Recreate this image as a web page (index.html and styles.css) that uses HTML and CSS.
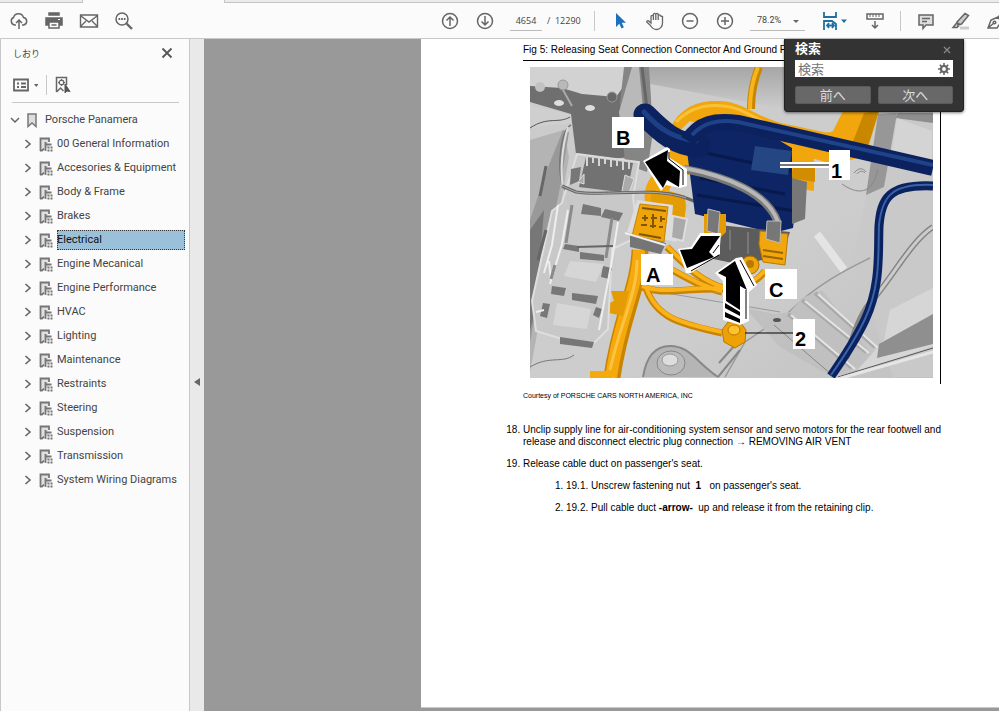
FILE: index.html
```html
<!DOCTYPE html>
<html lang="ja">
<head>
    <meta charset="UTF-8">
    <meta name="viewport" content="width=device-width, initial-scale=1.0">
    <title>Porsche Panamera</title>
    <link rel="stylesheet" href="styles.css">
</head>
<body>
    <svg class="defs" width="0" height="0" aria-hidden="true">
        <symbol id="chevron" viewBox="0 0 8 12">
            <path d="M1.500 2l4.500 4-4.500 4" fill="none" stroke="#666" stroke-width="1.600"/>
        </symbol>
        <symbol id="section" viewBox="0 0 14 15">
            <path d="M2 2h7v9H2z" fill="#e0e0e0"/>
            <path d="M1.500 14V1.500H10V5M1 13.500h2l2-2" fill="none" stroke="#757575" stroke-width="1.800"/>
            <path d="M6.500 5v9M6.500 7.500h6M8.500 10.500h2M11.500 10.500h2M8.500 13.500h2M11.500 13.500h2" fill="none" stroke="#757575" stroke-width="1.800"/>
        </symbol>
    </svg>

    <div class="tabs"><div class="tab-home"></div><div class="tab-active"></div><div class="tab-rest"></div></div>

    <header class="toolbar">
        <div class="group file-group">
            <button class="icon" aria-label="Upload"><svg viewBox="0 0 20 20"><path d="M7 14H5.500A4 4 0 0 1 4.500 6.500 5.200 5.200 0 0 1 14.500 6.500 3.800 3.800 0 0 1 14.500 14H13M10 18V9M7 12l3-3 3 3"/></svg></button>
            <button class="icon" aria-label="Print"><svg viewBox="0 0 20 20"><path class="fill" d="M5 2h10v2H5zM2 7h16v7H2z"/><path d="M5 11h10v6H5z" fill="#fff"/><path d="M7.500 14h5"/><path d="M4 5.500h12" stroke="#fff" stroke-width="1"/><path d="M14 8.500h2" stroke="#fff" stroke-width="1"/></svg></button>
            <button class="icon" aria-label="Mail"><svg viewBox="0 0 20 20"><path d="M1.500 4h17v12h-17zM2 5l8 6 8-6M2 15l5-5M18 15l-5-5" stroke-width="1.400"/></svg></button>
            <button class="icon" aria-label="Find"><svg viewBox="0 0 20 20"><circle cx="8" cy="8" r="6"/><path d="M12.500 12.500l5.500 5.500" stroke-width="2.400"/><path d="M4.500 8h7" stroke-dasharray="1.700 1" stroke-width="2"/></svg></button>
        </div>
        <div class="group view-group">
            <button class="icon" aria-label="Previous page"><svg viewBox="0 0 20 20"><circle cx="10" cy="10" r="7.500"/><path d="M10 15V6M6.500 9.500L10 6l3.500 3.500"/></svg></button>
            <button class="icon" aria-label="Next page"><svg viewBox="0 0 20 20"><circle cx="10" cy="10" r="7.500"/><path d="M10 5v9M6.500 10.500L10 14l3.500-3.500"/></svg></button>
            <div class="pager"><input type="text" value="4654" aria-label="Page"><span>/&nbsp; 12290</span></div>
            <span class="sep"></span>
            <button class="icon" aria-label="Select"><svg viewBox="0 0 20 20"><path d="M6 2v14l3.300-3.200 2.200 4.700 2.400-1.200-2.200-4.500H16z" fill="#1f6fbf" stroke="none"/></svg></button>
            <button class="icon" aria-label="Hand"><svg viewBox="0 0 20 20"><path d="M6 12V5.500a1.200 1.200 0 0 1 2.400 0V9 3.500a1.200 1.200 0 0 1 2.400 0V9 3.500a1.200 1.200 0 0 1 2.400 0V9 5a1.200 1.200 0 0 1 2.400 0L17.500 5.500V12c0 3-2 6.500-6 6.500-3.500 0-5-2-6.500-4.500L1.700 11c0-1.500 1.500-1.500 2.300-.8z" stroke-width="1.300"/></svg></button>
            <button class="icon" aria-label="Zoom out"><svg viewBox="0 0 20 20"><circle cx="10" cy="10" r="7.500"/><path d="M6.500 10h7"/></svg></button>
            <button class="icon" aria-label="Zoom in"><svg viewBox="0 0 20 20"><circle cx="10" cy="10" r="7.500"/><path d="M6 10h8M10 6v8"/></svg></button>
            <label class="zoom"><select aria-label="Zoom"><option>78.2%</option></select></label>
            <button class="icon fit" aria-label="Fit width"><svg viewBox="0 0 30 20"><path d="M4 1v5h12V1M4 19v-9h8l4 3v6M7 14.500h7M9 12l-2 2.500L9 17M12 12l2 2.500-2 2.500" stroke="#1f6f9f" stroke-width="1.800"/><path d="M21 8.500h6l-3 3.500z" fill="#1f6f9f" stroke="none"/></svg></button>
            <button class="icon" aria-label="Scrolling"><svg viewBox="0 0 20 20"><path d="M2 3h16v5H2z"/><path d="M5 3v3M8 3v3M11 3v3M14 3v3" stroke-width="1"/><path d="M10 10v7M7 14l3 3 3-3"/></svg></button>
            <span class="sep"></span>
            <button class="icon" aria-label="Comment"><svg viewBox="0 0 20 20"><path d="M3 4h14v10h-7l-3 3.500V14H3z" fill="#ddd"/><path d="M6 7.500h8M6 10.500h5"/></svg></button>
            <button class="icon" aria-label="Highlight"><svg viewBox="0 0 20 20"><path d="M9 15.500h9v3H9z" fill="#ccc" stroke="none"/><path d="M6 11l8-8.500 3.500 2L10.500 13 7 14zM2 16.500l4-5 3 2-3 3z" fill="#ccc"/></svg></button>
            <button class="icon" aria-label="Sign"><svg viewBox="0 0 20 20"><path d="M2 17l3-8 7-3 3 5-4 6zM12 6l3-3 4 5-4 3M2 17l6-5"/><circle cx="8.500" cy="11.500" r="1.300"/></svg></button>
        </div>
    </header>

    <main class="workspace">
        <aside class="sidebar">
            <div class="panel-head">
                <h2>しおり</h2>
                <button class="close" aria-label="Close"><svg width="12" height="12" viewBox="0 0 12 12"><path d="M1.500 1.500l9 9M10.500 1.500l-9 9" stroke="#555" stroke-width="1.800"/></svg></button>
            </div>
            <div class="panel-tools">
                <button aria-label="Options"><svg width="26" height="18" viewBox="0 0 26 18"><path d="M2 3.500h14v11H2z" fill="none" stroke="#666" stroke-width="1.800"/><path d="M5 7.500h2M5 11h2M9 7.500h5M9 11h5" stroke="#666" stroke-width="1.800"/><path d="M22 8h4.500l-2.200 3z" fill="#666"/></svg></button>
                <span class="sep"></span>
                <button aria-label="Find bookmark"><svg width="16" height="18" viewBox="0 0 16 18"><path d="M1.500 16V1.500h10V9M1.500 16l4-4 3 3" fill="none" stroke="#666" stroke-width="1.500"/><circle cx="6.500" cy="6.500" r="2.300" fill="none" stroke="#666" stroke-width="1.300"/><path d="M6.500 3v2M6.500 8v2M3 6.500h2M8 6.500h2" stroke="#666"/><path d="M10 8v9l2-2 3 .5z" fill="#555" stroke="#555"/></svg></button>
            </div>
            <nav>
                <div class="row root">
                    <button class="toggle" aria-label="Collapse"><svg width="10" height="8" viewBox="0 0 10 8"><path d="M1 2l4 4 4-4" fill="none" stroke="#666" stroke-width="1.500"/></svg></button>
                    <svg width="10" height="15" viewBox="0 0 10 15"><path d="M1 1h8v12.500l-4-3.500-4 3.500z" fill="#ddd" stroke="#777" stroke-width="1.500"/></svg>
                    <a href="#">Porsche Panamera</a>
                </div>
                <ul class="tree">
                    <li class="row"><button class="toggle" aria-label="Expand"><svg><use href="#chevron"/></svg></button><svg class="mark"><use href="#section"/></svg><a href="#">00 General Information</a></li>
                    <li class="row"><button class="toggle" aria-label="Expand"><svg><use href="#chevron"/></svg></button><svg class="mark"><use href="#section"/></svg><a href="#">Accesories &amp; Equipment</a></li>
                    <li class="row"><button class="toggle" aria-label="Expand"><svg><use href="#chevron"/></svg></button><svg class="mark"><use href="#section"/></svg><a href="#">Body &amp; Frame</a></li>
                    <li class="row"><button class="toggle" aria-label="Expand"><svg><use href="#chevron"/></svg></button><svg class="mark"><use href="#section"/></svg><a href="#">Brakes</a></li>
                    <li class="row selected"><button class="toggle" aria-label="Expand"><svg><use href="#chevron"/></svg></button><svg class="mark"><use href="#section"/></svg><a href="#">Electrical</a></li>
                    <li class="row"><button class="toggle" aria-label="Expand"><svg><use href="#chevron"/></svg></button><svg class="mark"><use href="#section"/></svg><a href="#">Engine Mecanical</a></li>
                    <li class="row"><button class="toggle" aria-label="Expand"><svg><use href="#chevron"/></svg></button><svg class="mark"><use href="#section"/></svg><a href="#">Engine Performance</a></li>
                    <li class="row"><button class="toggle" aria-label="Expand"><svg><use href="#chevron"/></svg></button><svg class="mark"><use href="#section"/></svg><a href="#">HVAC</a></li>
                    <li class="row"><button class="toggle" aria-label="Expand"><svg><use href="#chevron"/></svg></button><svg class="mark"><use href="#section"/></svg><a href="#">Lighting</a></li>
                    <li class="row"><button class="toggle" aria-label="Expand"><svg><use href="#chevron"/></svg></button><svg class="mark"><use href="#section"/></svg><a href="#">Maintenance</a></li>
                    <li class="row"><button class="toggle" aria-label="Expand"><svg><use href="#chevron"/></svg></button><svg class="mark"><use href="#section"/></svg><a href="#">Restraints</a></li>
                    <li class="row"><button class="toggle" aria-label="Expand"><svg><use href="#chevron"/></svg></button><svg class="mark"><use href="#section"/></svg><a href="#">Steering</a></li>
                    <li class="row"><button class="toggle" aria-label="Expand"><svg><use href="#chevron"/></svg></button><svg class="mark"><use href="#section"/></svg><a href="#">Suspension</a></li>
                    <li class="row"><button class="toggle" aria-label="Expand"><svg><use href="#chevron"/></svg></button><svg class="mark"><use href="#section"/></svg><a href="#">Transmission</a></li>
                    <li class="row"><button class="toggle" aria-label="Expand"><svg><use href="#chevron"/></svg></button><svg class="mark"><use href="#section"/></svg><a href="#">System Wiring Diagrams</a></li>
                </ul>
            </nav>
        </aside>
        <button class="splitter" aria-label="Hide panel"><svg width="6" height="8" viewBox="0 0 6 8"><path d="M6 0v8L0 4z" fill="#666"/></svg></button>

        <section class="viewer">
            <article class="page">
                <figure>
                    <figcaption>Fig 5: Releasing Seat Connection Connector And Ground P</figcaption>
                    <div class="frame">
                        <svg class="drawing" viewBox="530 67 403 311">
                            <defs>
                                <linearGradient id="floor" x1="0" y1="0" x2="1" y2="1">
                                    <stop offset="0" stop-color="#cbcbcb"/>
                                    <stop offset=".6" stop-color="#cdcdcd"/>
                                    <stop offset="1" stop-color="#c2c2c2"/>
                                </linearGradient>
                                <linearGradient id="roof" x1="0" y1="0" x2="0" y2="1">
                                    <stop offset="0" stop-color="#a6a6a6"/>
                                    <stop offset="1" stop-color="#cfcfcf"/>
                                </linearGradient>
                            </defs>
                            <rect x="530" y="67" width="403" height="311" fill="url(#floor)"/>

                            <!-- body shell, left -->
                            <path d="M640 67h160v45l-150-28z" fill="url(#roof)"/>
                            <path d="M530 67h96l-8 33-88-10z" fill="#d2d2d2"/>
                            <path d="M530 86l32 2 20 6 34 3 10-14 6 74-55 5-6-48-41-12z" fill="#6f6f6f"/>
                            <path d="M530 105l41 10v8l-28 3-13 3z" fill="#cfcfcf"/>
                            <path d="M530 128c18-12 28-4 40-11" fill="none" stroke="#555"/>
                            <path d="M530 140l34-10 5 27-6 35-33 180z" fill="#b4b4b4"/>
                            <path d="M530 220l17-50 16-40 6 2-8 50-31 160z" fill="#999"/>
                            <path d="M530 230l14-20-8 100-6 20z" fill="#777"/>
                            <path d="M571 125c-10 5-14 40-9 58 8 20 10 8 14 10" fill="none" stroke="#777" stroke-width="1.500"/>
                            <path d="M568 127c-6 20-8 45-5 60" fill="none" stroke="#ddd" stroke-width="2"/>
                            <path d="M624 67h25l4 65-6 40-22-8-5-60z" fill="#858585"/>
                            <path d="M632 67h7l5 52h-9l-13 20-3-27z" fill="#b9b9b9"/>
                            <path d="M642 67l6 50" stroke="#666" stroke-width="3"/>
                            <circle cx="563" cy="85" r="5" fill="#b9b9b9" stroke="#999"/>
                            <path d="M563 90l9 16" stroke="#aaa" stroke-width="2"/>
                            <circle cx="540" cy="87" r="5" fill="#c2c2c2"/>
                            <circle cx="612" cy="97" r="5" fill="#666" stroke="#999"/>
                            <ellipse cx="559" cy="103" rx="5" ry="3" fill="#ddd"/>
                            <ellipse cx="590" cy="108" rx="5" ry="3" fill="#ddd"/>

                            <!-- right hand body panels -->
                            <path d="M880 113h53v264h-40l-40-120 20-90z" fill="#c9c9c9"/>
                            <path d="M878 114l19-1-13 74-18 8z" fill="#979797"/>
                            <path d="M898 113h35v10l-38-5z" fill="#8e8e8e"/>
                            <path d="M897 118l35 13v40l-42-7z" fill="#d4d4d4"/>
                            <path d="M842 184c20 14 32 6 36-15M854 173c5-6 9-5 12-1M857 174c3-4 6-3 8-1" fill="none" stroke="#888"/>
                            <path d="M817 234l27 36" stroke="#e4e4e4" stroke-width="8"/>
                            <path d="M870 258c-22 11-52 25-82 55l-43 29-20 35" fill="none" stroke="#999" stroke-width="1.500"/>
                            <path d="M745 308l30 6 15-2 12-14 20-8 54 70-44 17-52-30z" fill="#c0c0c0"/>
                            <path d="M802 300l64 52M788 314l64 54M815 293l60 54" stroke="#aaa" stroke-width="4"/>
                            <path d="M805 301l64 52M791 315l64 54M818 294l60 54" stroke="#e5e5e5" stroke-width="2"/>
                            <path d="M774 325l58 50" stroke="#888"/>
                            <path d="M740 350l-22 27M735 345l-16 18" stroke="#888" stroke-width="2"/>
                            <ellipse cx="777" cy="320" rx="4" ry="2" fill="#555"/>
                            <path d="M933 288l-43 22-6 30-30 34 79-28z" fill="#d6d6d6"/>
                            <path d="M933 314l-54 30-2 14 56-14z" fill="#8f8f8f"/>
                            <path d="M838 377l95-29" stroke="#555"/>
                            <path d="M838 379l95-27" stroke="#e5e5e5" stroke-width="3"/>
                            <path d="M933 227c-22 14-40 50-63 76-10 12-16 30-24 55" fill="none" stroke="#858585" stroke-width="6"/>
                            <path d="M933 227c-22 14-40 50-63 76" fill="none" stroke="#ccc" stroke-width="3"/>
                            <path d="M660 292l120 20" stroke="#999"/>
                            <path d="M643 377c4-25 15-31 27-31 20 0 26 16 48 31" fill="#b5b5b5" stroke="#888" stroke-width="2"/>
                            <ellipse cx="671" cy="363" rx="14" ry="12" fill="#bbb" stroke="#888"/>
                            <ellipse cx="670" cy="360" rx="8" ry="6" fill="#ddd" stroke="#999"/>
                            <path d="M530 367c20-12 32-3 44-12" fill="none" stroke="#777"/>

                            <!-- yellow hoses -->
                            <path d="M759 67c-5 12-8 25-8 42" fill="none" stroke="#c88600" stroke-width="8"/>
                            <path d="M758 67c-5 12-8 25-8 42" fill="none" stroke="#f8b51a" stroke-width="4"/>
                            <path d="M671 126c12-21 30-26 49-25 25 1 37 18 70 24 23 4 38 10 43 6l10-20h36l-13 44-30 10-50-14-60-20-36-10-15 14z" fill="#f0a60c"/>
                            <path d="M676 122c15-16 32-18 48-16 25 2 38 22 70 26" fill="none" stroke="#f9c03a" stroke-width="3"/>
                            <path d="M879 111l-14 44-18 2 17-44z" fill="#c98700"/>
                            <path d="M660 168c-20 16-18 35-8 50l30 2c8-12 4-25-4-26l40-20-50-30z" fill="#f0a60c"/>
                            <path d="M651 190l34 5v22l-34-4z" fill="#e39c04"/>
                            <path d="M676 173l20 3v38l-9-2v-16l-18-5z" fill="#ccc"/>
                            <path d="M742 138l72 14v39l-20-3z" fill="#f0a60c"/>
                            <path d="M793 168h22v14l-24-4z" fill="#d28c00"/>
                            <path d="M640 250c-1 38-19 65-28 127" fill="none" stroke="#c88400" stroke-width="17"/>
                            <path d="M639 250c-1 38-19 65-28 127" fill="none" stroke="#f6a90b" stroke-width="12"/>
                            <path d="M637 260c0 35-16 60-27 110" fill="none" stroke="#fbc344" stroke-width="3"/>
                            <path d="M611 291h18l-6 25-14-3v-10l5-2z" fill="#e59b03"/>
                            <path d="M590 371h22v7h-22z" fill="#f6a90b"/>
                            <path d="M667 247c20 20 35 36 60 42M672 270c18 10 32 18 50 22M642 287c22 8 30 2 80 2 20 0 34-6 43-18M646 288c10 30 34 36 76 45" fill="none" stroke="#c88400" stroke-width="7"/>
                            <path d="M667 246c20 20 35 36 60 42M672 269c18 10 32 18 50 22M642 286c22 8 30 2 80 2 20 0 34-6 43-18M646 287c10 30 34 36 76 45" fill="none" stroke="#fbb118" stroke-width="4"/>

                            <!-- relay carrier -->
                            <path d="M577 154l62 8-6 35 5 40-26 12-4 80-14 14-32-4-26-8-4-30 20-90 10-8z" fill="#c8c8c8" stroke="#dedede" stroke-width="2"/>
                            <path d="M586 157l47 6-6 30-48-6z" fill="#727272"/>
                            <path d="M587 155v11M593 156v7M599 156v10M605 157v7M611 158v9M617 158v8M623 160v10M629 160v9" stroke="#d5d5d5" stroke-width="2"/>
                            <path d="M584 184v-10l-6 8zM625 175l9 4-5 14-7-2z" fill="#aaa" stroke="#ddd"/>
                            <path d="M571 169l10-2-2 14-9 4zM583 204l18 4v8l-20-2zM605 209l18 4-4 8-18-4zM565 244l14 2v6l-16-3zM580 252l24 3v6l-24-2zM552 286l14 2-2 8-13-2zM572 293l26 3-2 8-24-4zM543 303l7 1-3 14-7-2zM603 266l9 2-3 11-8-2zM596 307l6 2-3 9-6-3zM560 337l34 5-2 6-32-4z" fill="#777"/>
                            <path d="M570 261l34 3-8 18-32-6zM557 303l34 6-4 20-34-4z" fill="#d6d6d6"/>
                            <path d="M558 205l-6 40-8 28M568 210l-6 34-12 40M618 222l-6 38-13 70M549 261l2 20M536 312l8-2" fill="none" stroke="#eee" stroke-width="2"/>
                            <path d="M572 205l-6 38M612 218l-6 40M555 265l-4 14" stroke="#8b8b8b" stroke-width="3"/>
                            <path d="M540 196l6-30M546 230l-8 30" stroke="#666" stroke-width="3"/>
                            <path d="M577 247l36-1" stroke="#666" stroke-width="2"/>
                            <path d="M562 186l14 6c30 5 75-6 110 6 12 4 22 10 26 16" fill="none" stroke="#666" stroke-width="3"/>
                            <path d="M562 186l14 6c30 5 75-6 110 6" fill="none" stroke="#aaa"/>
                            <path d="M637 200l36 5-2 27 6 10-50-10z" fill="#ddd"/>
                            <path d="M673 216l14 3-4 22-12-3z" fill="#aaa" stroke="#ddd" stroke-width="2"/>
                            <path d="M640 204l28 3-4 35-32-6z" fill="#efa40a" stroke="#c88400"/>
                            <path d="M642 208l24 3M642 218h6m3 0h6m3 1h5M641 225h6m3 1h6m3 1h4M639 234l22 4M645 215v6M653 214v14M661 216v6" stroke="#805600" stroke-width="2"/>
                            <path d="M630 234l36 9-5 11-31-7z" fill="#757575"/>
                            <path d="M625 233l40 12" stroke="#eee" stroke-width="2"/>

                            <!-- blue connector and hoses -->
                            <path d="M685 135l40-11 40 8 27 16v30l6 8-5 42-20 5-78-19z" fill="#0d2465"/>
                            <path d="M701 152l90 19M697 195l98 16M700 178l85 16" stroke="#081a4c" stroke-width="3"/>
                            <path d="M755 146l37 5-4 24-37-5z" fill="#244783"/>
                            <path d="M792 178l15 4-2 37-13 5z" fill="#777"/>
                            <path d="M708 224l82 8-8 23-40 10-38-8z" fill="#5c5c5c"/>
                            <path d="M712 228v20M730 230v20M748 232v22" stroke="#777" stroke-width="2"/>
                            <path d="M645 115c18 18 30 29 54 31" fill="none" stroke="#0b225f" stroke-width="23" stroke-linecap="round"/>
                            <path d="M644 112c16 18 30 26 52 29" fill="none" stroke="#1d3f83" stroke-width="5" stroke-linecap="round"/>
                            <path d="M688 141c11-18 27-21 50-18l195 45" fill="none" stroke="#0b225f" stroke-width="16"/>
                            <path d="M692 135c11-12 25-16 46-13l195 43" fill="none" stroke="#1f4288" stroke-width="4"/>
                            <path d="M933 186c-45-2-52 13-54 40-1 26 2 60-14 94-8 17-20 36-34 56" fill="none" stroke="#0a2260" stroke-width="9"/>
                            <path d="M933 185c-43-2-51 13-54 40-1 26 2 60-14 94-8 17-20 36-34 56" fill="none" stroke="#3b62a5" stroke-width="2"/>
                            <path d="M684 169c42 8 84 24 94 54" fill="none" stroke="#777" stroke-width="8"/>
                            <path d="M684 168c42 8 84 24 94 54" fill="none" stroke="#b7b7b7" stroke-width="4"/>

                            <!-- plugs -->
                            <path d="M704 214h22v18l-6 6-16-5z" fill="#e59b03"/>
                            <path d="M708 209l12 3-2 22-11-3z" fill="#777" stroke="#bbb"/>
                            <path d="M760 231l28 3-3 31-22-3-4-18z" fill="#f1a60b" stroke="#b97a00"/>
                            <path d="M767 221h14l-1 22-14-4z" fill="#777" stroke="#bbb"/>
                            <path d="M763 250l20 3M763 256l20 3" stroke="#9a6500" stroke-width="2"/>
                            <circle cx="750" cy="265" r="9" fill="#efa40a" stroke="#a87000"/>
                            <circle cx="750" cy="264" r="4" fill="#b87a00"/>
                            <path d="M722 330l6-8h12l6 8-1 12-10 6-11-6z" fill="#eda105" stroke="#b87800"/>
                            <ellipse cx="734" cy="330" rx="6" ry="5" fill="#ffc22e" stroke="#b87800"/>

                            <!-- arrows -->
                            <g fill="#fff">
                                <path d="M643 161l24-14 3 2v9l17 11v17l-7 2-14-3-5 6z"/>
                                <path d="M678 249l13-2 9-14h21l-1 13v8l-29 19h-5z"/>
                                <path d="M715 273l21-15 6-1 15 28-8 7v29l-9 4-17-5v-39z"/>
                            </g>
                            <g fill="#000">
                                <path d="M645 162l23-12-1 11 13 10-1 16-12-7-4 8z"/>
                                <path d="M680 250l12-1 9-13h19l-11 16 5 5-27 11z"/>
                                <path d="M718 273l17-12 12 29-7-4v24l-14-9v-24z"/>
                                <path d="M725 303l15 9v4l-15-8zM725 312l15 7v4l-15-6z"/>
                            </g>
                            <path d="M669 152v7l14 11v15M691 271l28-16M713 253l6-8M740 260l14 26M746 290v29" fill="none" stroke="#000"/>

                            <!-- callouts -->
                            <path d="M780 165h50" stroke="#fff" stroke-width="6"/>
                            <path d="M780 165h50" stroke="#777" stroke-width="2"/>
                            <path d="M745 333h50" stroke="#000"/>
                            <path d="M612 117h32v31h-32zM641 254h32v31h-32zM765 269h32v30h-32zM829 150h21v30h-21zM793 319h22v30h-22z" fill="#fff"/>
                            <g class="callout">
                                <text x="616" y="145">B</text>
                                <text x="646" y="282">A</text>
                                <text x="769" y="297">C</text>
                                <text x="831" y="178">1</text>
                                <text x="795" y="346">2</text>
                            </g>
                        </svg>
                    </div>
                    <p class="credit">Courtesy of PORSCHE CARS NORTH AMERICA, INC</p>
                </figure>
                <ol class="steps" start="18">
                    <li>Unclip supply line for air-conditioning system sensor and servo motors for the rear footwell and release and disconnect electric plug connection → REMOVING AIR VENT</li>
                    <li>Release cable duct on passenger's seat.
                        <ol>
                            <li>19.1. Unscrew fastening nut &nbsp;<span class="ref">1</span>&nbsp;&nbsp; on passenger's seat.</li>
                            <li>19.2. Pull cable duct <span class="ref">-arrow-</span>&nbsp; up and release it from the retaining clip.</li>
                        </ol>
                    </li>
                </ol>
            </article>

            <form class="search">
                <div class="search-head">
                    <label for="query">検索</label>
                    <button type="button" class="search-close" aria-label="Close"><svg width="8" height="8" viewBox="0 0 8 8"><path d="M1 1l6 6M7 1L1 7" stroke="#888" stroke-width="1.300"/></svg></button>
                </div>
                <div class="search-field">
                    <input id="query" type="text" placeholder="検索">
                    <button type="button" class="gear" aria-label="Options"><svg width="12" height="12" viewBox="0 0 12 12"><circle cx="6" cy="6" r="3" fill="none" stroke="#666" stroke-width="2.200"/><path d="M6 0v3M6 9v3M0 6h3M9 6h3M1.800 1.800l2 2M8.200 8.200l2 2M1.800 10.200l2-2M8.200 3.800l2-2" stroke="#666" stroke-width="1.600"/></svg></button>
                </div>
                <div class="search-actions">
                    <button type="button">前へ</button>
                    <button type="button">次へ</button>
                </div>
            </form>
        </section>
    </main>
</body>
</html>
```
FILE: styles.css
```css
* {
    box-sizing: border-box;
}

body {
    display: flex;
    flex-direction: column;
    height: 100vh;
    margin: 0;
    overflow: hidden;
    background: #fbfbfb;
    color: #444;
    font-family: Roboto, "Noto Sans CJK JP", sans-serif;
    font-size: 11px;
}

button {
    padding: 0;
    border: none;
    background: none;
    font: inherit;
}

svg {
    display: block;
}

.defs {
    position: absolute;
}

/* top bars */
.tabs {
    display: flex;
    flex: none;
    height: 3px;
}

.tab-home,
.tab-rest {
    background: #ebebeb;
    border-bottom: 1px solid #c4c4c4;
}

.tab-home {
    width: 83px;
    border-right: 1px solid #c4c4c4;
}

.tab-active {
    width: 141px;
}

.tab-rest {
    flex: 1;
    border-left: 1px solid #c4c4c4;
}

.toolbar {
    display: flex;
    flex: none;
    height: 36px;
    overflow: hidden;
    border-bottom: 1px solid #c8c8c8;
}

.group {
    display: flex;
    flex: none;
    align-items: center;
    gap: 15px;
}

.file-group {
    width: 440px;
    padding-left: 9px;
}

.icon {
    flex: none;
    width: 20px;
    height: 20px;
}

.icon svg {
    width: 100%;
    height: 100%;
    fill: none;
    stroke: #666;
    stroke-width: 1.5px;
}

.icon .fill {
    fill: #666;
}

.icon.fit {
    width: 30px;
}

.sep {
    width: 1px;
    height: 20px;
    background: #c8c8c8;
}

.pager {
    display: flex;
    align-items: center;
    gap: 5px;
    width: 69px;
    font-family: "Open Sans", sans-serif;
    font-size: 9px;
    white-space: nowrap;
}

.pager input {
    width: 32px;
    height: 20px;
    padding: 0;
    border: none;
    border-bottom: 1px solid #bbb;
    background: none;
    color: #444;
    font: inherit;
    text-align: center;
}

.zoom {
    position: relative;
    width: 55px;
}

.zoom select {
    width: 100%;
    height: 20px;
    padding: 0 0 0 7px;
    appearance: none;
    border: none;
    border-bottom: 1px solid #bbb;
    border-radius: 0;
    background: none;
    color: #444;
    font: inherit;
    font-size: 9px;
}

.zoom::after {
    content: "";
    position: absolute;
    top: 9px;
    right: 6px;
    border: 3px solid transparent;
    border-top-color: #666;
}

/* bookmarks panel */
.workspace {
    display: flex;
    flex: 1;
    min-height: 0;
}

.sidebar {
    flex: none;
    width: 190px;
    border: solid #c8c8c8;
    border-width: 0 1px;
}

.panel-head {
    display: flex;
    align-items: center;
    justify-content: space-between;
    height: 28px;
    padding: 0 16px 0 12px;
}

.panel-head h2 {
    margin: 0;
    font-size: 9px;
    font-weight: normal;
}

.panel-tools {
    display: flex;
    align-items: center;
    gap: 8px;
    height: 36px;
    margin: 0 10px 5px 11px;
    border-bottom: 1px solid #c8c8c8;
}

.row {
    display: flex;
    align-items: center;
    height: 24px;
}

.row a {
    color: inherit;
    text-decoration: none;
    white-space: nowrap;
    line-height: 20px;
}

.root {
    gap: 7px;
    padding-left: 9px;
}

.root a {
    padding-left: 1px;
}

.tree {
    margin: 0;
    padding: 0 4px 0 23px;
    list-style: none;
}

.toggle svg {
    width: 8px;
    height: 12px;
}

.root .toggle svg {
    width: 10px;
    height: 8px;
}

.mark {
    flex: none;
    width: 14px;
    height: 15px;
    margin: 0 4px 0 7px;
}

.selected a {
    flex: 1;
    background: #9bc1da;
    color: #111;
    outline: 1px dotted #333;
    outline-offset: -1px;
}

.splitter {
    display: flex;
    flex: none;
    align-items: center;
    justify-content: center;
    width: 14px;
    padding-top: 14px;
    background: #e9e9e9;
}

/* document */
.viewer {
    position: relative;
    display: flex;
    flex: 1;
    min-width: 0;
    padding: 0 0 3px 217px;
    background: #999;
}

.page {
    flex: 1;
    min-width: 0;
    padding: 5px 58px 0 102px;
    overflow: hidden;
    border-bottom: 1px solid #c8c8c8;
    background: #fff;
    color: #000;
    font-family: "Liberation Sans", Arial, sans-serif;
    font-size: 10px;
    line-height: 12px;
}

figure {
    max-width: 418px;
    margin: 0;
}

figcaption {
    height: 16px;
}

.frame {
    padding: 6px 7px;
    border: solid #000;
    border-width: 1px 1px 0 0;
}

.drawing {
    width: 100%;
    height: auto;
}

.callout {
    font-size: 20px;
    font-weight: bold;
}

.credit {
    margin: 6px 0 22px;
    font-size: 7px;
}

.steps {
    max-width: 418px;
    margin: 0;
    padding: 0;
}

.steps li {
    margin-bottom: 10px;
}

.steps ol {
    margin-top: 10px;
    padding-left: 43px;
}

.ref {
    font-weight: bold;
}

/* search popup */
.search {
    position: absolute;
    top: 0;
    right: 35px;
    width: 180px;
    padding: 0 10px 7px;
    border: 1px solid #222;
    border-top: none;
    border-radius: 0 0 4px 4px;
    background: #333;
    box-shadow: 0 1px 3px rgba(0, 0, 0, 0.5);
    font-family: "Noto Sans CJK JP", sans-serif;
}

.search-head {
    display: flex;
    align-items: center;
    justify-content: space-between;
    height: 21px;
    padding-right: 2px;
    color: #fff;
    font-size: 13px;
    font-weight: bold;
    line-height: 18px;
}

.search-head label {
    height: 21px;
}

.search-field {
    display: flex;
    align-items: center;
    height: 17px;
    padding-right: 3px;
    background: #fff;
}

.search-field input {
    flex: 1;
    min-width: 0;
    height: 17px;
    padding: 0 3px;
    border: none;
    background: none;
    font: inherit;
    font-size: 13px;
}

.search-actions {
    display: flex;
    gap: 7px;
    margin-top: 9px;
}

.search-actions button {
    flex: 1;
    height: 18px;
    border: 1px solid #5a5a5a;
    border-radius: 2px;
    background: #686868;
    color: #ddd;
    font-size: 13px;
    line-height: 16px;
}
```
